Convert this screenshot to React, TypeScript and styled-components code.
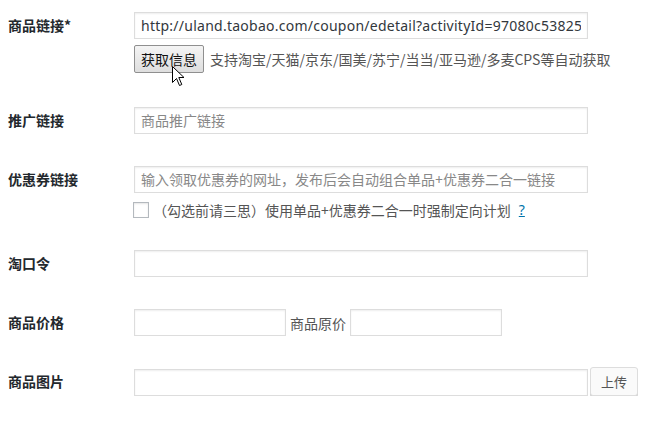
import React from 'react';
import styled, { createGlobalStyle } from 'styled-components';

const GlobalStyle = createGlobalStyle`
  body {
    margin: 0;
    background: #fff;
    font-family: "Noto Sans", "Noto Sans CJK SC", sans-serif;
    font-size: 14px;
    color: #444;
  }
`;

const Form = styled.form`
  display: flex;
  flex-direction: column;
  gap: 32px;
  padding: 12px 0 0 8px;
`;

const Row = styled.div<{ $shift?: number }>`
  display: grid;
  grid-template-columns: 126px auto;
  align-items: start;
  margin-top: ${(p) => p.$shift ?? 0}px;
`;

const Label = styled.label`
  font-family: "Noto Sans CJK SC", sans-serif;
  font-weight: bold;
  font-size: 14px;
  line-height: 27px;
  color: #23282d;
`;

const Field = styled.div`
  display: flex;
  flex-direction: column;
  align-items: flex-start;
`;

const Line = styled.div<{ $top?: number }>`
  display: flex;
  align-items: center;
  margin-top: ${(p) => p.$top ?? 0}px;
  position: relative;
`;

const CheckLine = styled(Line)`
  height: 16px;
  line-height: 16px;
`;

const TextInput = styled.input<{ $width?: number; $left?: number }>`
  box-sizing: border-box;
  width: ${(p) => p.$width ?? 454}px;
  height: 27px;
  margin: 0 0 0 ${(p) => p.$left ?? 0}px;
  padding: 0 6px;
  border: 1px solid #ddd;
  border-radius: 0;
  box-shadow: inset 0 1px 2px rgba(0, 0, 0, 0.07);
  background: #fff;
  font-family: "Noto Sans", "Noto Sans CJK SC", sans-serif;
  font-size: 14px;
  letter-spacing: 0.25px;
  color: #32373c;
  outline: none;

  &::placeholder {
    color: #888;
    letter-spacing: 0;
  }
`;

const SystemButton = styled.button`
  box-sizing: border-box;
  height: 28px;
  padding: 0 6px;
  border: 1px solid #8f8f8f;
  border-radius: 2px;
  background: linear-gradient(#f4f4f4, #dedede);
  font-family: "Noto Sans CJK SC", sans-serif;
  font-size: 14px;
  color: #111;
`;

const HelpText = styled.span<{ $gap?: number }>`
  margin-left: ${(p) => p.$gap ?? 6}px;
  font-family: "Noto Sans CJK SC", sans-serif;
  font-size: 14px;
  color: #555;
  white-space: nowrap;
`;

const Checkbox = styled.span`
  box-sizing: border-box;
  width: 16px;
  height: 16px;
  margin-left: -1px;
  border: 1px solid #b4b9be;
  background: #fff;
  box-shadow: inset 0 1px 2px rgba(0, 0, 0, 0.1);
`;

const HelpLink = styled.a`
  margin-left: 8px;
  color: #0073aa;
  text-decoration: underline;
  font-size: 14px;
`;

const UploadButton = styled.button`
  box-sizing: border-box;
  height: 29px;
  margin: -1px 0 0 2px;
  padding: 0 10px 1px;
  border: 1px solid #ddd;
  border-radius: 3px;
  background: #fafafa;
  box-shadow: 0 1px 0 #ccc;
  font-family: "Noto Sans CJK SC", sans-serif;
  font-size: 13px;
  color: #555;
`;

const Cursor = styled.svg`
  position: absolute;
  left: 38px;
  top: 21px;
`;

const ArrowCursor = () => (
  <Cursor width="13" height="21" viewBox="0 0 13 21">
    <path
      d="M0.5 0.5 L0.5 16.5 L4.5 12.5 L7.5 19.5 L9.8 18.5 L6.8 11.5 L12 11.5 Z"
      fill="#fff"
      stroke="#000"
      strokeWidth="1"
    />
  </Cursor>
);

export default function App() {
  return (
    <>
      <GlobalStyle />
      <Form>
        <Row>
          <Label>商品链接*</Label>
          <Field>
            <TextInput defaultValue="http://uland.taobao.com/coupon/edetail?activityId=97080c53825cb" />
            <Line $top={6}>
              <SystemButton type="button">获取信息</SystemButton>
              <ArrowCursor />
              <HelpText>支持淘宝/天猫/京东/国美/苏宁/当当/亚马逊/多麦CPS等自动获取</HelpText>
            </Line>
          </Field>
        </Row>
        <Row $shift={2}>
          <Label>推广链接</Label>
          <Field>
            <TextInput placeholder="商品推广链接" />
          </Field>
        </Row>
        <Row>
          <Label>优惠券链接</Label>
          <Field>
            <TextInput placeholder="输入领取优惠券的网址，发布后会自动组合单品+优惠券二合一链接" />
            <CheckLine $top={9}>
              <Checkbox />
              <HelpText $gap={4}>（勾选前请三思）使用单品+优惠券二合一时强制定向计划</HelpText>
              <HelpLink href="#">?</HelpLink>
            </CheckLine>
          </Field>
        </Row>
        <Row>
          <Label>淘口令</Label>
          <Field>
            <TextInput />
          </Field>
        </Row>
        <Row>
          <Label>商品价格</Label>
          <Line>
            <TextInput $width={152} />
            <HelpText $gap={4}>商品原价</HelpText>
            <TextInput $width={152} $left={4} />
          </Line>
        </Row>
        <Row>
          <Label>商品图片</Label>
          <Line>
            <TextInput />
            <UploadButton type="button">上传</UploadButton>
          </Line>
        </Row>
      </Form>
    </>
  );
}
